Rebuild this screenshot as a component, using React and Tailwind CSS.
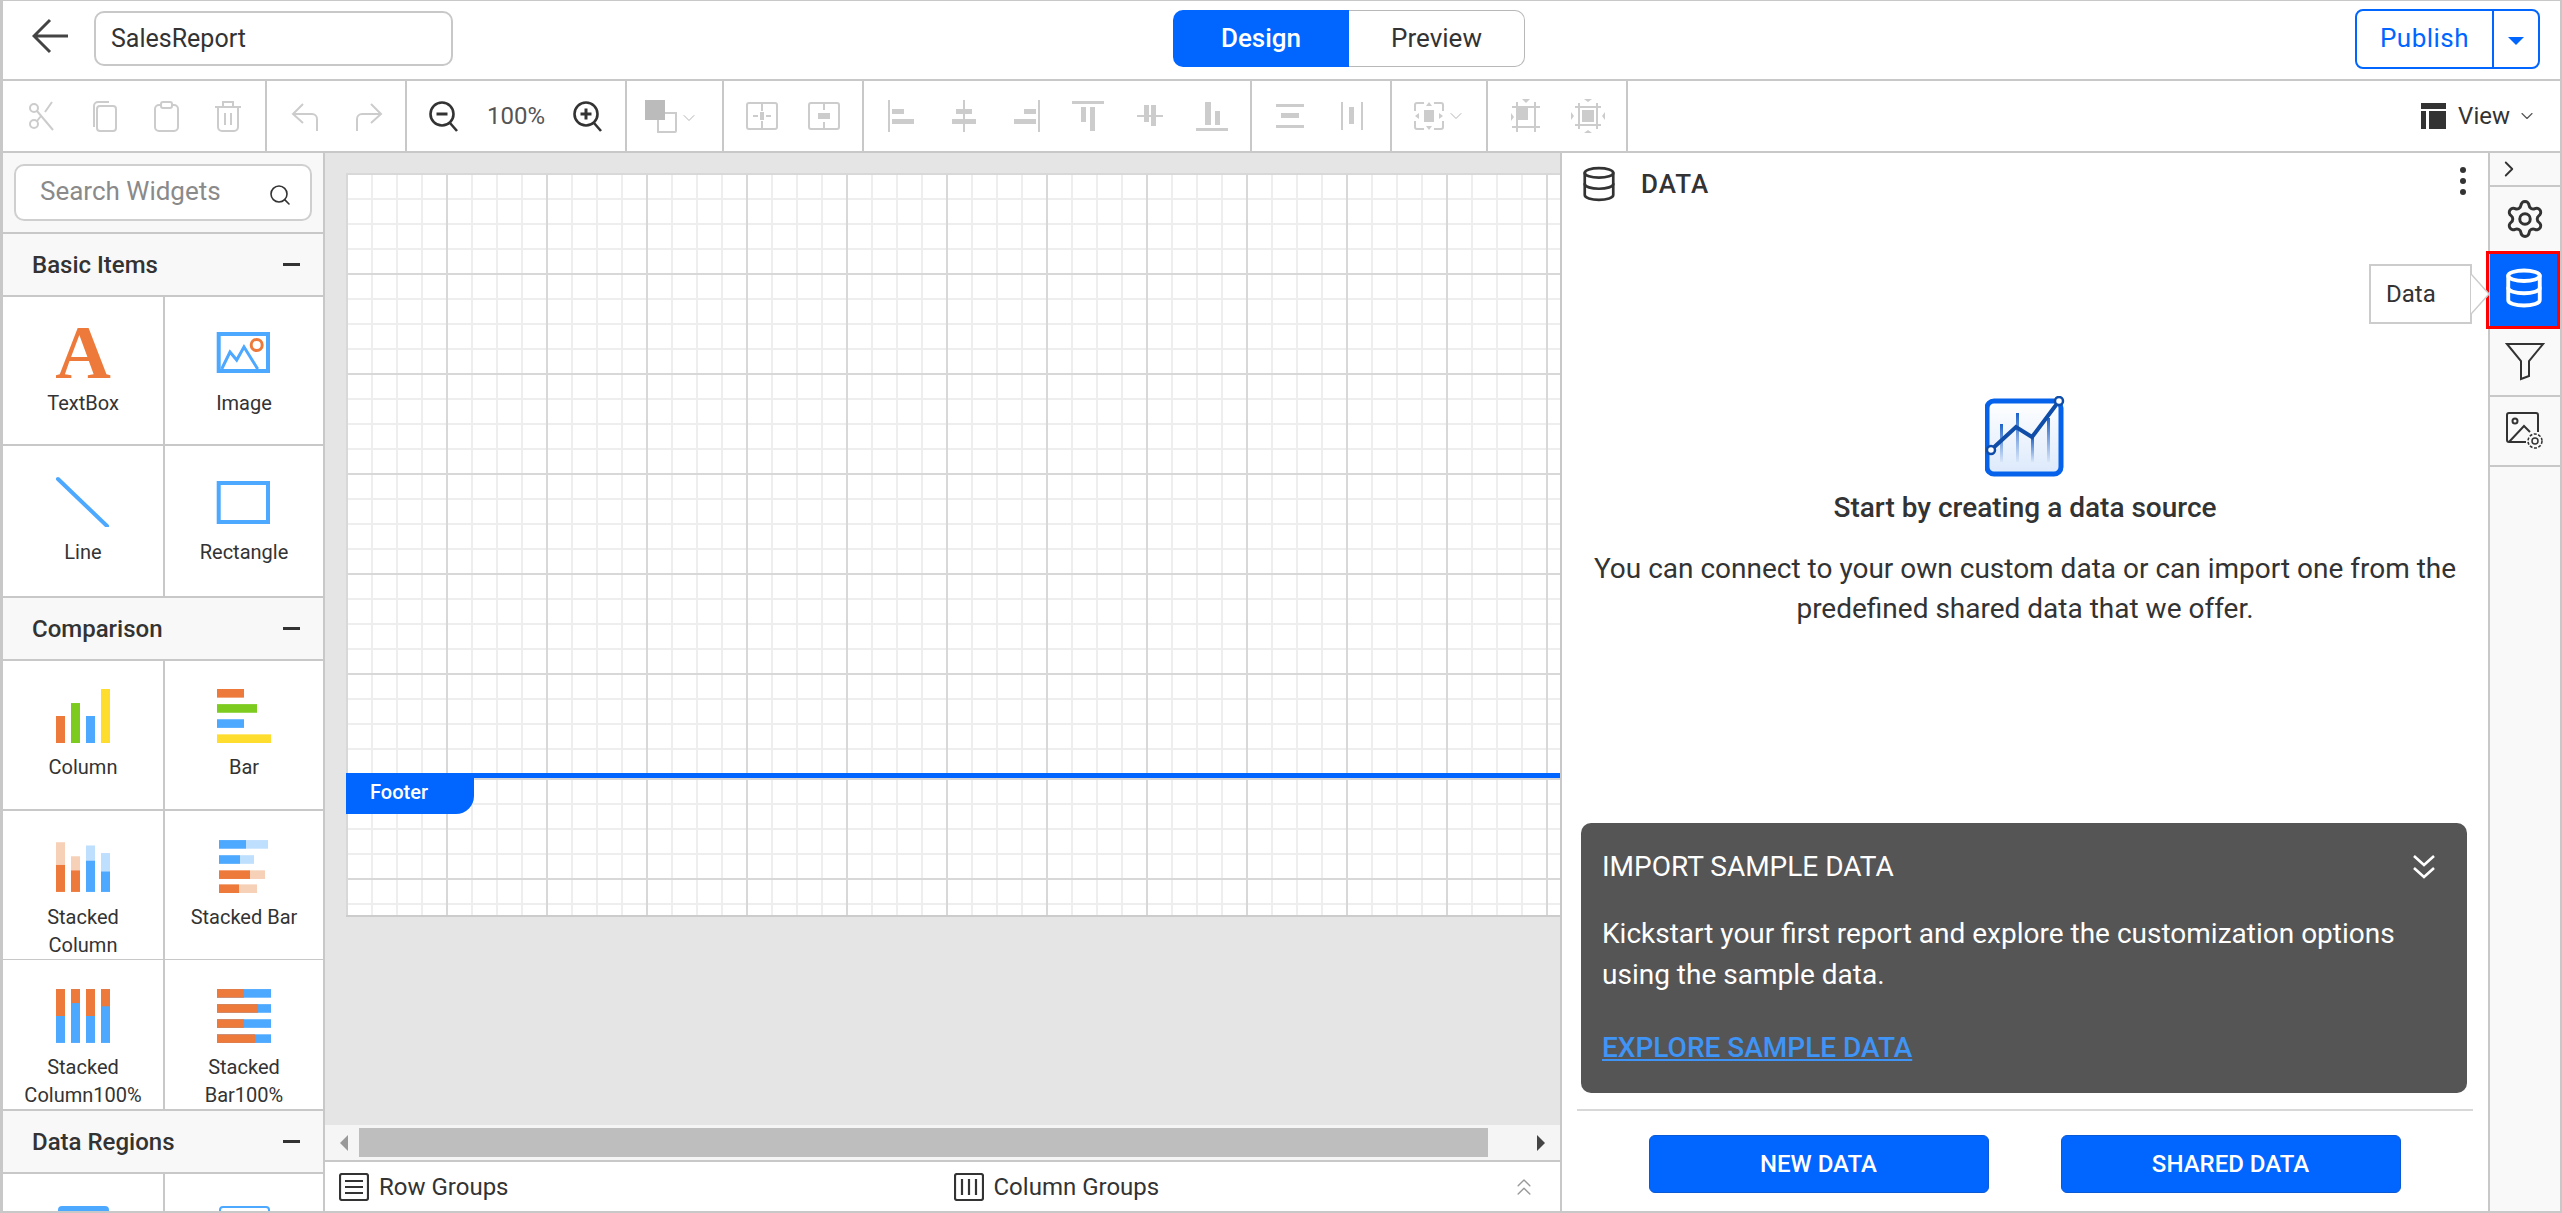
import React from "react";
import { ChevronDown, ChevronRight, ChevronsUp, Database, Search, Settings } from "lucide-react";

const GRID =
  "bg-[image:linear-gradient(to_right,#d8d8d8_2px,transparent_2px),linear-gradient(to_bottom,#d8d8d8_2px,transparent_2px),linear-gradient(to_right,#eeeeee_2px,transparent_2px),linear-gradient(to_bottom,#eeeeee_2px,transparent_2px)] bg-[size:100px_100px,100px_100px,25px_25px,25px_25px]";

const C = "#cccccc";
const O = "#ed7a3b";
const B = "#4da8ff";
const LO = "#f7d0b8";
const LB = "#bfdfff";

// toolbar glyphs, all on a 32 box
const Ico = ({ children, w = 32, h = 32 }) => (
  <svg width={w} height={h} viewBox={`0 0 ${w} ${h}`} fill="none" stroke={C} strokeWidth="2">
    {children}
  </svg>
);

const Scissors = () => (
  <Ico>
    <circle cx="8" cy="8" r="4" />
    <circle cx="8" cy="24" r="4" />
    <path d="M11 11 L27 30 M11 21 L15 16 M19 12 L26 2" />
  </Ico>
);
const CopyIco = () => (
  <Ico>
    <path d="M6 27 V6 a4 4 0 0 1 4 -4 H21" />
    <rect x="9" y="6" width="19" height="25" rx="3" />
  </Ico>
);
const PasteIco = () => (
  <Ico>
    <rect x="5" y="5" width="23" height="26" rx="4" />
    <rect x="11" y="2" width="11" height="6" rx="2" fill="#fff" />
  </Ico>
);
const TrashIco = () => (
  <Ico>
    <path d="M3 7 H29 M11 7 V2 H21 V7 M6 7 V27 a4 4 0 0 0 4 4 H22 a4 4 0 0 0 4 -4 V7 M13 13 V25 M19 13 V25" />
  </Ico>
);
const UndoIco = () => (
  <Ico>
    <path d="M13 4 L3 14 L13 23 M3 14 H22 a5 5 0 0 1 5 5 V31" />
  </Ico>
);
const RedoIco = () => (
  <Ico>
    <path d="M19 4 L29 14 L19 23 M29 14 H10 a5 5 0 0 0 -5 5 V31" />
  </Ico>
);
const ZoomIco = ({ plus }) => (
  <svg width="32" height="32" viewBox="0 0 32 32" fill="none" stroke="#333333" strokeWidth="2.6">
    <circle cx="14" cy="14" r="11.5" />
    <path d="M22 23 L29 31" />
    <path d="M8.5 14 H19.5" strokeWidth="3" />
    {plus && <path d="M14 8.5 V19.5" strokeWidth="3" />}
  </svg>
);
const FillIco = () => (
  <svg width="34" height="34" viewBox="0 0 34 34" fill="none">
    <rect x="1" y="1" width="20" height="20" fill="#bbbbbb" />
    <path d="M21 14 H32 V32 a1 1 0 0 1 -1 1 H14 V21" stroke="#cccccc" strokeWidth="2" />
  </svg>
);
const GroupIco = () => (
  <Ico>
    <rect x="1" y="3" width="30" height="26" rx="2" />
    <path d="M16 3 V11 M16 21 V29 M7 16 H12" />
    <rect x="14" y="12" width="4" height="8" fill={C} stroke="none" />
    <path d="M20 16 H25" />
  </Ico>
);
const UngroupIco = () => (
  <Ico>
    <rect x="1" y="3" width="30" height="26" rx="2" />
    <path d="M16 3 V10 M16 22 V29" />
    <rect x="10" y="13" width="12" height="6" fill={C} stroke="none" />
  </Ico>
);
const Fill = ({ children }) => (
  <svg width="32" height="32" viewBox="0 0 32 32" fill={C}>
    {children}
  </svg>
);
const AlignLeft = () => (
  <Fill>
    <rect x="2" width="2" height="32" />
    <rect x="6" y="9" width="12" height="5" />
    <rect x="6" y="19" width="22" height="5" />
  </Fill>
);
const AlignCenter = () => (
  <Fill>
    <rect x="15" width="2" height="32" />
    <rect x="8" y="9" width="16" height="5" />
    <rect x="4" y="19" width="24" height="5" />
  </Fill>
);
const AlignRight = () => (
  <Fill>
    <rect x="28" width="2" height="32" />
    <rect x="14" y="9" width="12" height="5" />
    <rect x="4" y="19" width="22" height="5" />
  </Fill>
);
const AlignTop = () => (
  <Fill>
    <rect y="1" width="32" height="3" />
    <rect x="9" y="7" width="5" height="15" />
    <rect x="18" y="7" width="5" height="24" />
  </Fill>
);
const AlignMiddle = () => (
  <Fill>
    <rect x="3" y="15" width="26" height="2" />
    <rect x="10" y="5" width="5" height="17" />
    <rect x="17" y="5" width="5" height="21" />
  </Fill>
);
const AlignBottom = () => (
  <Fill>
    <rect y="28" width="32" height="3" />
    <rect x="9" y="2" width="6" height="23" />
    <rect x="19" y="11" width="5" height="14" />
  </Fill>
);
const DistH = () => (
  <Fill>
    <rect x="2" y="4" width="28" height="3" />
    <rect x="7" y="13" width="18" height="5" />
    <rect x="2" y="25" width="28" height="3" />
  </Fill>
);
const DistV = () => (
  <Fill>
    <rect x="5" y="2" width="2" height="28" />
    <rect x="13" y="7" width="5" height="17" />
    <rect x="25" y="2" width="2" height="28" />
  </Fill>
);
const SizeIco = () => (
  <svg width="32" height="32" viewBox="0 0 32 32" fill={C}>
    <path d="M2 11 V5 a2 2 0 0 1 2 -2 H11 M21 3 H28 a2 2 0 0 1 2 2 V11 M30 21 V27 a2 2 0 0 1 -2 2 H21 M11 29 H4 a2 2 0 0 1 -2 -2 V21" fill="none" stroke={C} strokeWidth="2" />
    <rect x="11" y="10" width="10" height="12" />
    <path d="M16 2 L19 6 H13 Z M16 30 L19 26 H13 Z M2 16 L6 13 V19 Z M30 16 L26 13 V19 Z" />
  </svg>
);
const SameSize = () => (
  <svg width="34" height="34" viewBox="0 0 34 34" fill={C}>
    <path d="M8 3 V33 M26 3 V33 M3 8 H31 M3 28 H31" stroke={C} strokeWidth="2" fill="none" />
    <rect x="9" y="9" width="10" height="12" />
    <path d="M13 0 H21 L17 4 Z M2 14 L5 18 L2 22 Z" />
  </svg>
);
const SameSizeAll = () => (
  <svg width="34" height="34" viewBox="0 0 34 34" fill={C}>
    <path d="M8 4 V30 M26 4 V30 M4 8 H30 M4 26 H30" stroke={C} strokeWidth="2" fill="none" />
    <rect x="11" y="11" width="12" height="12" />
    <path d="M13 0 H21 L17 3 Z M13 34 H21 L17 31 Z M0 13 V21 L3 17 Z M34 13 V21 L31 17 Z" />
  </svg>
);

const TB = ({ children }) => <div className="flex w-[62px] shrink-0 items-center justify-center">{children}</div>;

const Group = ({ className, children }) => (
  <div className={`flex h-full shrink-0 items-center border-r-2 border-[#c8c8c8] ${className}`}>{children}</div>
);

const Toolbar = () => (
  <div className="flex h-[72px] shrink-0 items-stretch border-b-2 border-[#c8c8c8] bg-white">
    <Group className="w-[264px] pl-[8px]">
      <TB><Scissors /></TB>
      <TB><CopyIco /></TB>
      <TB><PasteIco /></TB>
      <TB><TrashIco /></TB>
    </Group>
    <Group className="w-[140px] pl-[8px]">
      <TB><UndoIco /></TB>
      <TB><RedoIco /></TB>
    </Group>
    <Group className="w-[220px] pl-[6px]">
      <TB><ZoomIco /></TB>
      <div className="w-[82px] text-center text-[24px] text-[#555555]">100%</div>
      <TB><ZoomIco plus /></TB>
    </Group>
    <Group className="w-[97px] pl-[17px]">
      <FillIco />
      <ChevronDown size={20} strokeWidth={1.2} color="#b5b5b5" className="ml-[1px] mt-[4px]" />
    </Group>
    <Group className="w-[140px] pl-[7px]">
      <TB><GroupIco /></TB>
      <TB><UngroupIco /></TB>
    </Group>
    <Group className="w-[388px] pl-[7px]">
      <TB><AlignLeft /></TB>
      <TB><AlignCenter /></TB>
      <TB><AlignRight /></TB>
      <TB><AlignTop /></TB>
      <TB><AlignMiddle /></TB>
      <TB><AlignBottom /></TB>
    </Group>
    <Group className="w-[140px] pl-[7px]">
      <TB><DistH /></TB>
      <TB><DistV /></TB>
    </Group>
    <Group className="w-[96px] pl-[21px]">
      <SizeIco />
      <ChevronDown size={20} strokeWidth={1.2} color="#b5b5b5" className="ml-[1px]" />
    </Group>
    <Group className="w-[140px] pl-[7px]">
      <TB><SameSize /></TB>
      <TB><SameSizeAll /></TB>
    </Group>
    <div className="ml-auto flex items-center pr-[23px] text-[24px] text-[#333333]">
      <svg width="26" height="26" viewBox="0 0 26 26" fill="#333333" className="mr-[11px]">
        <rect width="25" height="6" />
        <rect y="8" width="5" height="18" />
        <rect x="8" y="8" width="17" height="18" />
      </svg>
      View
      <ChevronDown size={20} strokeWidth={1.4} color="#555555" className="ml-[7px]" />
    </div>
  </div>
);

// widget icons
const ATextIcon = () => (
  <div className="flex h-[52px] w-[56px] justify-center font-['Liberation_Serif',serif] text-[77px] font-bold leading-[52px] text-[#ed7a3b]">
    A
  </div>
);
const ImageIcon = () => (
  <svg width="56" height="52" viewBox="0 0 56 52" fill="none">
    <rect x="2.7" y="8" width="49.3" height="37" stroke={B} strokeWidth="4" />
    <path d="M5.7 43 L14 26 L20.7 34 L28 21 L41.7 43" stroke={B} strokeWidth="3" />
    <circle cx="40.7" cy="19" r="5.5" stroke={O} strokeWidth="3" fill="#fff" />
  </svg>
);
const LineIcon = () => (
  <svg width="56" height="52" viewBox="0 0 56 52" fill="none">
    <path d="M3 4 L52 51" stroke={B} strokeWidth="4" strokeLinecap="round" />
  </svg>
);
const RectIcon = () => (
  <svg width="56" height="52" viewBox="0 0 56 52" fill="none">
    <rect x="2.7" y="8" width="49.3" height="39" stroke={B} strokeWidth="4" />
  </svg>
);
const ColumnIcon = () => (
  <svg width="56" height="54" viewBox="0 0 56 50" preserveAspectRatio="none">
    <rect x="1" y="25" width="9" height="25" fill={O} />
    <rect x="16" y="13" width="9" height="37" fill="#7ecb20" />
    <rect x="31" y="25" width="9" height="25" fill={B} />
    <rect x="46" y="0" width="9" height="50" fill="#ffdd2e" />
  </svg>
);
const BarIcon = () => (
  <svg width="56" height="54" viewBox="0 0 56 50" preserveAspectRatio="none">
    <rect x="1" y="0" width="27" height="8" fill={O} />
    <rect x="1" y="14" width="40" height="8" fill="#7ecb20" />
    <rect x="1" y="28" width="27" height="8" fill={B} />
    <rect x="1" y="42" width="54" height="8" fill="#ffdd2e" />
  </svg>
);
const StackedColumnIcon = () => (
  <svg width="56" height="54" viewBox="0 0 56 50" preserveAspectRatio="none">
    <rect x="1" y="3" width="9" height="21" fill={LO} />
    <rect x="1" y="24" width="9" height="25" fill={O} />
    <rect x="16" y="16" width="9" height="13" fill={LO} />
    <rect x="16" y="29" width="9" height="20" fill={O} />
    <rect x="31" y="6" width="9" height="14" fill={LB} />
    <rect x="31" y="20" width="9" height="29" fill={B} />
    <rect x="46" y="13" width="9" height="17" fill={LB} />
    <rect x="46" y="30" width="9" height="19" fill={B} />
  </svg>
);
const StackedBarIcon = () => (
  <svg width="56" height="54" viewBox="0 0 56 50" preserveAspectRatio="none">
    <rect x="3" y="1" width="27" height="8" fill={B} />
    <rect x="30" y="1" width="22" height="8" fill={LB} />
    <rect x="3" y="15" width="21" height="8" fill={B} />
    <rect x="24" y="15" width="14" height="8" fill={LB} />
    <rect x="3" y="29" width="31" height="8" fill={O} />
    <rect x="34" y="29" width="15" height="8" fill={LO} />
    <rect x="3" y="42" width="20" height="8" fill={O} />
    <rect x="23" y="42" width="18" height="8" fill={LO} />
  </svg>
);
const Stacked100Icon = () => (
  <svg width="56" height="56" viewBox="0 0 56 52" preserveAspectRatio="none">
    <rect x="1" y="1" width="9" height="50" fill={B} />
    <rect x="1" y="1" width="9" height="25" fill={O} />
    <rect x="16" y="1" width="9" height="50" fill={B} />
    <rect x="16" y="1" width="9" height="13" fill={O} />
    <rect x="31" y="1" width="9" height="50" fill={B} />
    <rect x="31" y="1" width="9" height="25" fill={O} />
    <rect x="46" y="1" width="9" height="50" fill={B} />
    <rect x="46" y="1" width="9" height="16" fill={O} />
  </svg>
);
const StackedBar100Icon = () => (
  <svg width="56" height="56" viewBox="0 0 56 52" preserveAspectRatio="none">
    <rect x="1" y="1" width="54" height="8" fill={B} />
    <rect x="1" y="1" width="27" height="8" fill={O} />
    <rect x="1" y="15" width="54" height="8" fill={B} />
    <rect x="1" y="15" width="41" height="8" fill={O} />
    <rect x="1" y="29" width="54" height="8" fill={B} />
    <rect x="1" y="29" width="27" height="8" fill={O} />
    <rect x="1" y="43" width="54" height="8" fill={B} />
    <rect x="1" y="43" width="38" height="8" fill={O} />
  </svg>
);

const Section = ({ label, className }) => (
  <div className={`flex shrink-0 items-center justify-between border-b-2 border-[#c8c8c8] bg-[#f8f8f8] pl-[29px] pr-[23px] ${className}`}>
    <span className="text-[24px] font-medium text-[#333333]">{label}</span>
    <span className="h-[3px] w-[17px] bg-[#333333]" />
  </div>
);

const Widget = ({ icon, label, top = "pt-[29px]", gap = "mt-[11px]", last }) => (
  <div className={`flex flex-col items-center bg-white ${top} ${last ? "" : "border-r-2 border-[#c8c8c8]"}`}>
    {icon}
    <div className={`${gap} text-center text-[20px] leading-[28px] text-[#333333]`}>{label}</div>
  </div>
);

const WidgetRow = ({ className, a, b }) => (
  <div className={`grid shrink-0 grid-cols-[162px_158px] border-b-2 border-[#c8c8c8] ${className}`}>
    {a}
    {b}
  </div>
);

const Sidebar = () => (
  <div className="flex h-full w-[322px] shrink-0 flex-col overflow-hidden border-r-2 border-[#c8c8c8] bg-[#f8f8f8]">
    <div className="h-[81px] shrink-0 border-b-2 border-[#c8c8c8] px-[11px] pt-[11px]">
      <div className="flex h-[57px] w-full items-center justify-between rounded-[10px] border-2 border-[#cfcfcf] bg-white pl-[24px] pr-[18px]">
        <span className="pb-[3px] text-[26px] leading-[32px] text-[#8a8a8a]">Search Widgets</span>
        <Search size={24} strokeWidth={1.6} color="#333333" className="mt-[5px]" />
      </div>
    </div>
    <Section label="Basic Items" className="h-[63px]" />
    <WidgetRow
      className="h-[149px]"
      a={<Widget icon={<ATextIcon />} label="TextBox" />}
      b={<Widget icon={<ImageIcon />} label="Image" last />}
    />
    <WidgetRow
      className="h-[152px]"
      a={<Widget icon={<LineIcon />} label="Line" />}
      b={<Widget icon={<RectIcon />} label="Rectangle" last />}
    />
    <Section label="Comparison" className="h-[63px]" />
    <WidgetRow
      className="h-[150px]"
      a={<Widget icon={<ColumnIcon />} label="Column" top="pt-[28px]" gap="mt-[10px]" />}
      b={<Widget icon={<BarIcon />} label="Bar" top="pt-[28px]" gap="mt-[10px]" last />}
    />
    <WidgetRow
      className="h-[149px]"
      a={<Widget icon={<StackedColumnIcon />} label={<>Stacked<br />Column</>} top="pt-[28px]" gap="mt-[10px]" />}
      b={<Widget icon={<StackedBarIcon />} label="Stacked Bar" top="pt-[28px]" gap="mt-[10px]" last />}
    />
    <WidgetRow
      className="h-[151px]"
      a={<Widget icon={<Stacked100Icon />} label={<>Stacked<br />Column100%</>} top="pt-[28px]" gap="mt-[9px]" />}
      b={<Widget icon={<StackedBar100Icon />} label={<>Stacked<br />Bar100%</>} top="pt-[28px]" gap="mt-[9px]" last />}
    />
    <Section label="Data Regions" className="h-[63px]" />
    <div className="grid flex-1 grid-cols-[162px_158px] overflow-hidden bg-white">
      <div className="flex justify-center border-r-2 border-[#c8c8c8] pt-[32px]">
        <div className="h-[60px] w-[51px] shrink-0 rounded-t-[4px] bg-[#4da8ff]" />
      </div>
      <div className="flex justify-center pt-[32px]">
        <div className="h-[60px] w-[51px] shrink-0 rounded-t-[4px] border-2 border-[#4da8ff]" />
      </div>
    </div>
  </div>
);

const Canvas = () => (
  <div className="flex h-full w-[1235px] shrink-0 flex-col bg-[#e5e5e5]">
    <div className="relative flex-1 overflow-hidden pl-[21px] pt-[20px]">
      <div className={`h-[600px] bg-white ${GRID}`} />
      <div className={`relative h-[144px] border-b-2 border-t-[5px] border-b-[#cccccc] border-t-[#0066ff] bg-white ${GRID}`}>
        <div className="absolute -top-[5px] left-0 flex h-[41px] w-[128px] items-center rounded-br-[18px] bg-[#0066ff] pb-[3px] pl-[24px] text-[20px] font-medium text-white">
          Footer
        </div>
      </div>
    </div>
    <div className="flex h-[37px] shrink-0 items-center border-b-2 border-[#c8c8c8] bg-[#f5f5f5]">
      <div className="flex w-[34px] justify-center pl-[4px]">
        <div className="h-0 w-0 border-y-[8px] border-r-[8px] border-y-transparent border-r-[#999999]" />
      </div>
      <div className="h-[29px] w-[1129px] bg-[#bebebe]" />
      <div className="flex flex-1 justify-center pl-[34px]">
        <div className="h-0 w-0 border-y-[8px] border-l-[8px] border-y-transparent border-l-[#444444]" />
      </div>
    </div>
    <div className="flex h-[49px] shrink-0 items-center bg-white pl-[14px] text-[24px] text-[#333333]">
      <svg width="30" height="28" viewBox="0 0 30 28" fill="none" stroke="#333333" strokeWidth="2.2" className="mr-[10px]">
        <rect x="1" y="1" width="28" height="26" rx="2" />
        <path d="M6 8 H24 M6 14 H24 M6 20 H24" />
      </svg>
      <span>Row Groups</span>
      <svg width="30" height="28" viewBox="0 0 30 28" fill="none" stroke="#333333" strokeWidth="2.2" className="ml-[445px] mr-[10px]">
        <rect x="1" y="1" width="28" height="26" rx="2" />
        <path d="M8 6 V22 M15 6 V22 M22 6 V22" />
      </svg>
      <span>Column Groups</span>
      <ChevronsUp size={28} strokeWidth={1.2} color="#999999" className="ml-auto mr-[22px]" />
    </div>
  </div>
);

const Illustration = () => (
  <svg width="80" height="82" viewBox="0 0 80 82" fill="none">
    <defs>
      <linearGradient id="chartBg" x1="0" y1="0" x2="0" y2="1">
        <stop offset="0" stopColor="#ffffff" />
        <stop offset="1" stopColor="#dce9fb" />
      </linearGradient>
      <linearGradient id="chartBar" x1="0" y1="0" x2="0" y2="1">
        <stop offset="0" stopColor="#1e62c8" />
        <stop offset="1" stopColor="#1e62c8" stopOpacity="0.05" />
      </linearGradient>
    </defs>
    <rect x="2" y="5" width="74" height="73" rx="7" fill="url(#chartBg)" stroke="#0662ea" strokeWidth="5" />
    <rect x="15" y="28" width="3" height="38" fill="url(#chartBar)" />
    <rect x="31" y="17" width="3" height="49" fill="url(#chartBar)" />
    <rect x="46" y="41" width="3" height="25" fill="url(#chartBar)" />
    <rect x="62" y="22" width="3" height="44" fill="url(#chartBar)" />
    <path d="M6 54 L31 31 L47 41 L74 5" stroke="#0f4da8" strokeWidth="4" />
    <circle cx="6" cy="54" r="4" fill="#fff" stroke="#0f4da8" strokeWidth="2.5" />
    <circle cx="74" cy="5" r="4" fill="#fff" stroke="#0f4da8" strokeWidth="2.5" />
  </svg>
);

const DataPanel = () => (
  <div className="flex h-full w-[928px] shrink-0 flex-col border-l-2 border-[#c8c8c8] bg-white">
    <div className="flex h-[58px] shrink-0 items-center pl-[18px] pr-[21px] pt-[4px]">
      <Database size={38} strokeWidth={1.7} color="#333333" />
      <span className="ml-[23px] text-[26px] font-medium tracking-[1px] text-[#333333]">DATA</span>
      <svg width="8" height="30" viewBox="0 0 8 30" fill="#333333" className="ml-auto mb-[6px]">
        <circle cx="4" cy="4" r="3" />
        <circle cx="4" cy="15" r="3" />
        <circle cx="4" cy="26" r="3" />
      </svg>
    </div>
    <div className="mt-[185px] flex flex-col items-center text-center text-[#333333]">
      <Illustration />
      <div className="mt-[13px] text-[28px] font-medium leading-[34px]">Start by creating a data source</div>
      <div className="mt-[24px] w-[880px] text-[28px] leading-[40px]">
        You can connect to your own custom data or can import one from the predefined shared data that we offer.
      </div>
    </div>
    <div className="ml-[19px] mr-[21px] mt-[194px] h-[270px] shrink-0 rounded-[10px] bg-[#555555] px-[21px] pt-[26px] text-white">
      <div className="flex items-center justify-between text-[28px] leading-[36px]">
        <span>IMPORT SAMPLE DATA</span>
        <svg width="24" height="24" viewBox="0 0 24 24" fill="none" stroke="#ffffff" strokeWidth="2.6" className="mr-[10px]">
          <path d="M2 1 L12 10 L22 1 M2 13 L12 22 L22 13" />
        </svg>
      </div>
      <div className="mt-[28px] text-[28px] leading-[41px]">
        Kickstart your first report and explore the customization options using the sample data.
      </div>
      <div className="mt-[35px] text-[28px] font-medium leading-[36px] text-[#3f94f5] underline">EXPLORE SAMPLE DATA</div>
    </div>
    <div className="mx-[15px] mt-[16px] h-[2px] shrink-0 bg-[#d8d8d8]" />
    <div className="mt-[24px] flex justify-center gap-[72px] pr-[1px]">
      <button className="h-[58px] w-[340px] rounded-[6px] border border-[#0a5ad6] bg-[#0066ff] text-[24px] font-medium text-white">NEW DATA</button>
      <button className="h-[58px] w-[340px] rounded-[6px] border border-[#0a5ad6] bg-[#0066ff] text-[24px] font-medium text-white">SHARED DATA</button>
    </div>
  </div>
);

const StripCell = ({ className, children }) => (
  <div className={`flex shrink-0 items-center justify-center ${className}`}>{children}</div>
);

const RightStrip = () => (
  <div className="flex h-full w-[72px] shrink-0 flex-col border-l-2 border-[#c8c8c8] bg-[#f9f9f9]">
    <StripCell className="h-[34px] border-b-2 border-[#c8c8c8] pr-[32px]">
      <ChevronRight size={26} strokeWidth={1.7} color="#333333" />
    </StripCell>
    <StripCell className="h-[64px]">
      <Settings size={42} strokeWidth={1.7} color="#333333" />
    </StripCell>
    <StripCell className="relative h-[78px] bg-[#0066ff]">
      <Database size={42} strokeWidth={2.2} color="#ffffff" className="mb-[4px] mr-[2px]" />
      <div className="absolute -left-[4px] -right-[0px] inset-y-0 border-[3.5px] border-[#ff0000]" />
      <div className="absolute left-[-121px] top-[13px] flex h-[60px] w-[103px] items-center border-2 border-[#cccccc] bg-white pl-[15px] text-[24px] text-[#333333]">
        Data
      </div>
      <svg width="20" height="40" viewBox="0 0 20 40" className="absolute left-[-19px] top-[23px]" fill="#fff" stroke="#cccccc" strokeWidth="1.5">
        <path d="M0 0 L18 20 L0 40" />
      </svg>
    </StripCell>
    <StripCell className="h-[68px] border-b-2 border-[#c8c8c8] pb-[3px]">
      <svg width="40" height="40" viewBox="0 0 40 40" fill="none" stroke="#333333" strokeWidth="2">
        <path d="M2 3 H38 L24 20 V35 L16 38 V20 Z" />
      </svg>
    </StripCell>
    <StripCell className="h-[70px] border-b-2 border-[#c8c8c8]">
      <svg width="38" height="38" viewBox="0 0 38 38" fill="none" stroke="#333333" strokeWidth="2">
        <path d="M20 30 H3 a2 2 0 0 1 -2 -2 V3 a2 2 0 0 1 2 -2 H30 a2 2 0 0 1 2 2 V20" />
        <circle cx="9" cy="9" r="2.5" />
        <path d="M3 30 L18 14 L24 20" />
        <circle cx="29" cy="29" r="3" strokeWidth="1.5" />
        <circle cx="29" cy="29" r="7" strokeWidth="1.5" strokeDasharray="3 1.5" />
      </svg>
    </StripCell>
  </div>
);

const App = () => {
  return (
    <div className="flex h-[1213px] w-[2562px] flex-col overflow-hidden border-y-2 border-l-[3px] border-r-2 border-t border-[#c8c8c8] bg-white font-[Roboto,sans-serif]">
      <div className="flex h-[80px] shrink-0 items-center border-b-2 border-[#c8c8c8] bg-white pb-[3px]">
        <svg width="38" height="36" viewBox="0 0 38 36" fill="none" stroke="#444444" strokeWidth="3" className="mb-[5px] ml-[29px]">
          <path d="M18 2 L2 18 L18 34 M2 18 H36" />
        </svg>
        <div className="ml-[24px] flex h-[55px] w-[359px] items-center rounded-[10px] border-2 border-[#c8c8c8] pl-[15px] text-[25px] text-[#333333]">
          SalesReport
        </div>
        <div className="ml-[720px] flex h-[57px] w-[352px] text-[26px]">
          <div className="flex w-[176px] items-center justify-center rounded-l-[10px] bg-[#0066ff] font-medium text-white">Design</div>
          <div className="flex w-[176px] items-center justify-center rounded-r-[10px] border border-l-0 border-[#b8b8b8] text-[#333333]">Preview</div>
        </div>
        <div className="ml-auto mr-[20px] flex h-[60px] w-[185px] rounded-[8px] border-2 border-[#0066ff] text-[26px] tracking-[0.5px] text-[#0066ff]">
          <div className="flex w-[137px] items-center justify-center border-r-2 border-[#0066ff]">Publish</div>
          <div className="flex flex-1 items-center justify-center pt-[4px]">
            <div className="h-0 w-0 border-x-[8px] border-t-[8px] border-x-transparent border-t-[#0066ff]" />
          </div>
        </div>
      </div>
      <Toolbar />
      <div className="flex min-h-0 flex-1">
        <Sidebar />
        <Canvas />
        <DataPanel />
        <RightStrip />
      </div>
    </div>
  );
};

export default App;
